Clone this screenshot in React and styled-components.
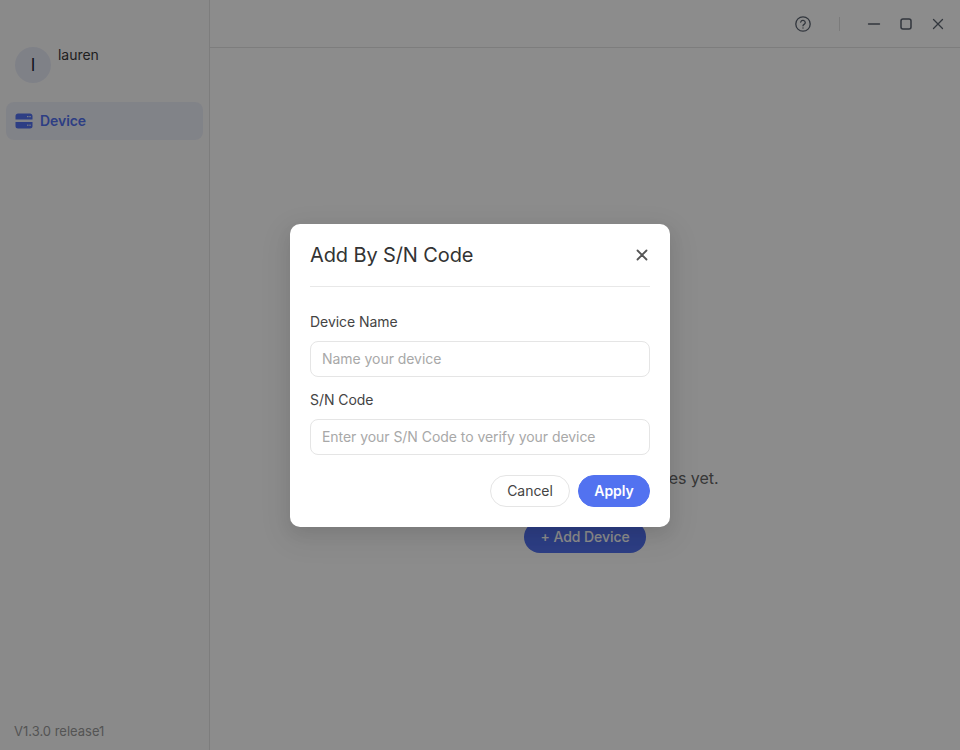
import React from "react";
import styled, { createGlobalStyle } from "styled-components";

const Global = createGlobalStyle`
  html, body { margin: 0; padding: 0; height: 100%; background: #fff; }
  body { font-family: Inter, "Liberation Sans", sans-serif; color: #444; overflow: hidden; }
  * { box-sizing: border-box; }
`;

const Shell = styled.div`
  width: 960px;
  height: 750px;
  display: flex;
  position: relative;
  overflow: hidden;
  background: #fff;
`;

const Sidebar = styled.aside`
  width: 210px;
  height: 100%;
  flex: none;
  display: flex;
  flex-direction: column;
  border-right: 1px solid #e4e4e4;
  background: #fcfcfc;
  padding: 47px 6px 0 6px;
`;

const Profile = styled.div`
  display: flex;
  align-items: flex-start;
  gap: 7px;
  padding-left: 9px;
  height: 55px;
`;

const Avatar = styled.div`
  width: 36px;
  height: 36px;
  border-radius: 50%;
  background: #e8ebf6;
  color: #1a1a2e;
  display: flex;
  align-items: center;
  justify-content: center;
  font-size: 17px;
  line-height: 36px;
`;

const UserName = styled.div`
  font-size: 14px;
  line-height: 15px;
  color: #3a3a3a;
  letter-spacing: -0.03px;
`;

const NavItem = styled.div`
  height: 38px;
  border-radius: 8px;
  background: #eceef7;
  display: flex;
  align-items: center;
  gap: 7px;
  padding: 0 0 1px 9px;
  color: #5272f0;
  font-size: 14px;
  font-weight: 600;
  letter-spacing: -0.06px;
`;

const NavIcon = styled.svg`
  width: 18px;
  height: 16px;
  flex: none;
  margin-top: 1px;
`;

const Version = styled.div`
  margin-top: auto;
  padding: 0 0 11px 8px;
  font-size: 13px;
  line-height: 16px;
  color: #999;
`;

const Main = styled.main`
  flex: 1;
  display: flex;
  flex-direction: column;
  min-width: 0;
`;

const TitleBar = styled.header`
  height: 48px;
  flex: none;
  border-bottom: 1px solid #e4e4e4;
  display: flex;
  align-items: center;
  justify-content: flex-end;
  padding-right: 14px;
  color: #5b6370;
`;

const WinButton = styled.span`
  width: 16px;
  height: 16px;
  display: flex;
  align-items: center;
  justify-content: center;
  margin-left: ${(p) => p.$gap}px;
`;

const BarDivider = styled.span`
  width: 1px;
  height: 14px;
  background: #e0e0e0;
  margin-left: 28px;
`;

const Empty = styled.div`
  flex: 1;
  display: flex;
  flex-direction: column;
  align-items: center;
  padding-top: 420px;
`;

const EmptyText = styled.div`
  font-size: 16px;
  line-height: 20px;
  color: #666;
  letter-spacing: -0.03px;
`;

const AddButton = styled.button`
  margin-top: 33px;
  width: 122px;
  height: 32px;
  border: 0;
  border-radius: 16px;
  background: #5272f0;
  color: #fff;
  font: 500 14px Inter, sans-serif;
  letter-spacing: -0.06px;
  padding: 0 0 2px;
`;

const Overlay = styled.div`
  position: absolute;
  inset: 0;
  background: rgba(0, 0, 0, 0.45);
`;

const Modal = styled.div`
  position: absolute;
  left: 290px;
  top: 224px;
  width: 380px;
  height: 303px;
  background: #fff;
  border-radius: 10px;
  padding: 0 20px;
  box-shadow: 0 6px 16px rgba(0, 0, 0, 0.08), 0 9px 28px 8px rgba(0, 0, 0, 0.05);
  display: flex;
  flex-direction: column;
`;

const ModalHead = styled.div`
  height: 63px;
  flex: none;
  border-bottom: 1px solid #e8e8e8;
  display: flex;
  align-items: center;
  justify-content: space-between;
`;

const ModalTitle = styled.h2`
  margin: 0;
  font-size: 20px;
  font-weight: 400;
  line-height: 24px;
  color: #333;
  letter-spacing: -0.12px;
`;

const Close = styled.span`
  width: 16px;
  height: 16px;
  display: flex;
  color: #555;
`;

const Field = styled.div`
  display: flex;
  flex-direction: column;
  gap: ${(p) => p.$gap}px;
  margin-top: ${(p) => p.$top}px;
`;

const Label = styled.label`
  font-size: 14px;
  line-height: 17px;
  color: #444;
  letter-spacing: -0.05px;
`;

const Input = styled.input`
  width: 100%;
  height: 36px;
  border: 1px solid #e5e5e5;
  border-radius: 8px;
  padding: 0 11px 2px;
  font: 400 14px Inter, sans-serif;
  letter-spacing: -0.05px;
  outline: none;
  background: #fff;
  &::placeholder { color: #a8a8a8; opacity: 1; }
`;

const Actions = styled.div`
  display: flex;
  justify-content: flex-end;
  gap: 8px;
  margin-top: 20px;
`;

const Pill = styled.button`
  height: 32px;
  width: ${(p) => p.$w}px;
  border-radius: 16px;
  border: 1px solid ${(p) => (p.$primary ? "#5272f0" : "#e5e5e5")};
  background: ${(p) => (p.$primary ? "#5272f0" : "#fff")};
  color: ${(p) => (p.$primary ? "#fff" : "#444")};
  font: ${(p) => (p.$primary ? 600 : 400)} 14px Inter, sans-serif;
  letter-spacing: -0.05px;
  padding: 0 0 1px;
`;

const stroke = { fill: "none", stroke: "currentColor", strokeLinecap: "round", strokeLinejoin: "round" };

export default function App() {
  return (
    <Shell>
      <Global />
      <Sidebar>
        <Profile>
          <Avatar>l</Avatar>
          <UserName>lauren</UserName>
        </Profile>
        <NavItem>
          <NavIcon viewBox="0 0 18 16">
            <path fill="#5272f0" d="M3 0.5h12c1.4 0 2.5 1 2.5 2.5v3.5H0.5V3c0-1.5 1.1-2.5 2.5-2.5zM0.5 9h17v4.2c0 1.3-1.1 2.3-2.5 2.3H3c-1.4 0-2.5-1-2.5-2.3z" />
            <rect x="12" y="3" width="1.5" height="1.2" fill="#dfe4f7" />
            <rect x="14.3" y="3" width="1.5" height="1.2" fill="#dfe4f7" />
            <rect x="12" y="11.6" width="1.5" height="1.2" fill="#dfe4f7" />
            <rect x="14.3" y="11.6" width="1.5" height="1.2" fill="#dfe4f7" />
          </NavIcon>
          Device
        </NavItem>
        <Version>V1.3.0 release1</Version>
      </Sidebar>
      <Main>
        <TitleBar>
          <WinButton $gap={0}>
            <svg width="16" height="16" viewBox="0 0 16 16" {...stroke} strokeWidth="1.3">
              <circle cx="8" cy="8" r="7.2" />
              <path d="M5.7 6.1a2.35 2.35 0 0 1 4.6.6c0 1.5-2.3 1.8-2.3 3.1" />
              <path d="M8 11.9v.1" />
            </svg>
          </WinButton>
          <BarDivider />
          <WinButton $gap={26}>
            <svg width="16" height="16" viewBox="0 0 16 16" {...stroke} strokeWidth="1.4">
              <path d="M2.5 8h11" />
            </svg>
          </WinButton>
          <WinButton $gap={16}>
            <svg width="16" height="16" viewBox="0 0 16 16" {...stroke} strokeWidth="1.5">
              <rect x="3" y="3" width="10" height="10" rx="2" />
            </svg>
          </WinButton>
          <WinButton $gap={16}>
            <svg width="16" height="16" viewBox="0 0 16 16" {...stroke} strokeWidth="1.3">
              <path d="M3.5 3.5l9 9M12.5 3.5l-9 9" />
            </svg>
          </WinButton>
        </TitleBar>
        <Empty>
          <EmptyText>You haven't added any devices yet.</EmptyText>
          <AddButton>+ Add Device</AddButton>
        </Empty>
      </Main>
      <Overlay />
      <Modal>
        <ModalHead>
          <ModalTitle>Add By S/N Code</ModalTitle>
          <Close>
            <svg width="16" height="16" viewBox="0 0 16 16" {...stroke} strokeWidth="1.8">
              <path d="M3.5 3.5l9 9M12.5 3.5l-9 9" />
            </svg>
          </Close>
        </ModalHead>
        <Field $top={26} $gap={11}>
          <Label>Device Name</Label>
          <Input placeholder="Name your device" />
        </Field>
        <Field $top={14} $gap={11}>
          <Label>S/N Code</Label>
          <Input placeholder="Enter your S/N Code to verify your device" />
        </Field>
        <Actions>
          <Pill $w={80}>Cancel</Pill>
          <Pill $w={72} $primary>Apply</Pill>
        </Actions>
      </Modal>
    </Shell>
  );
}
